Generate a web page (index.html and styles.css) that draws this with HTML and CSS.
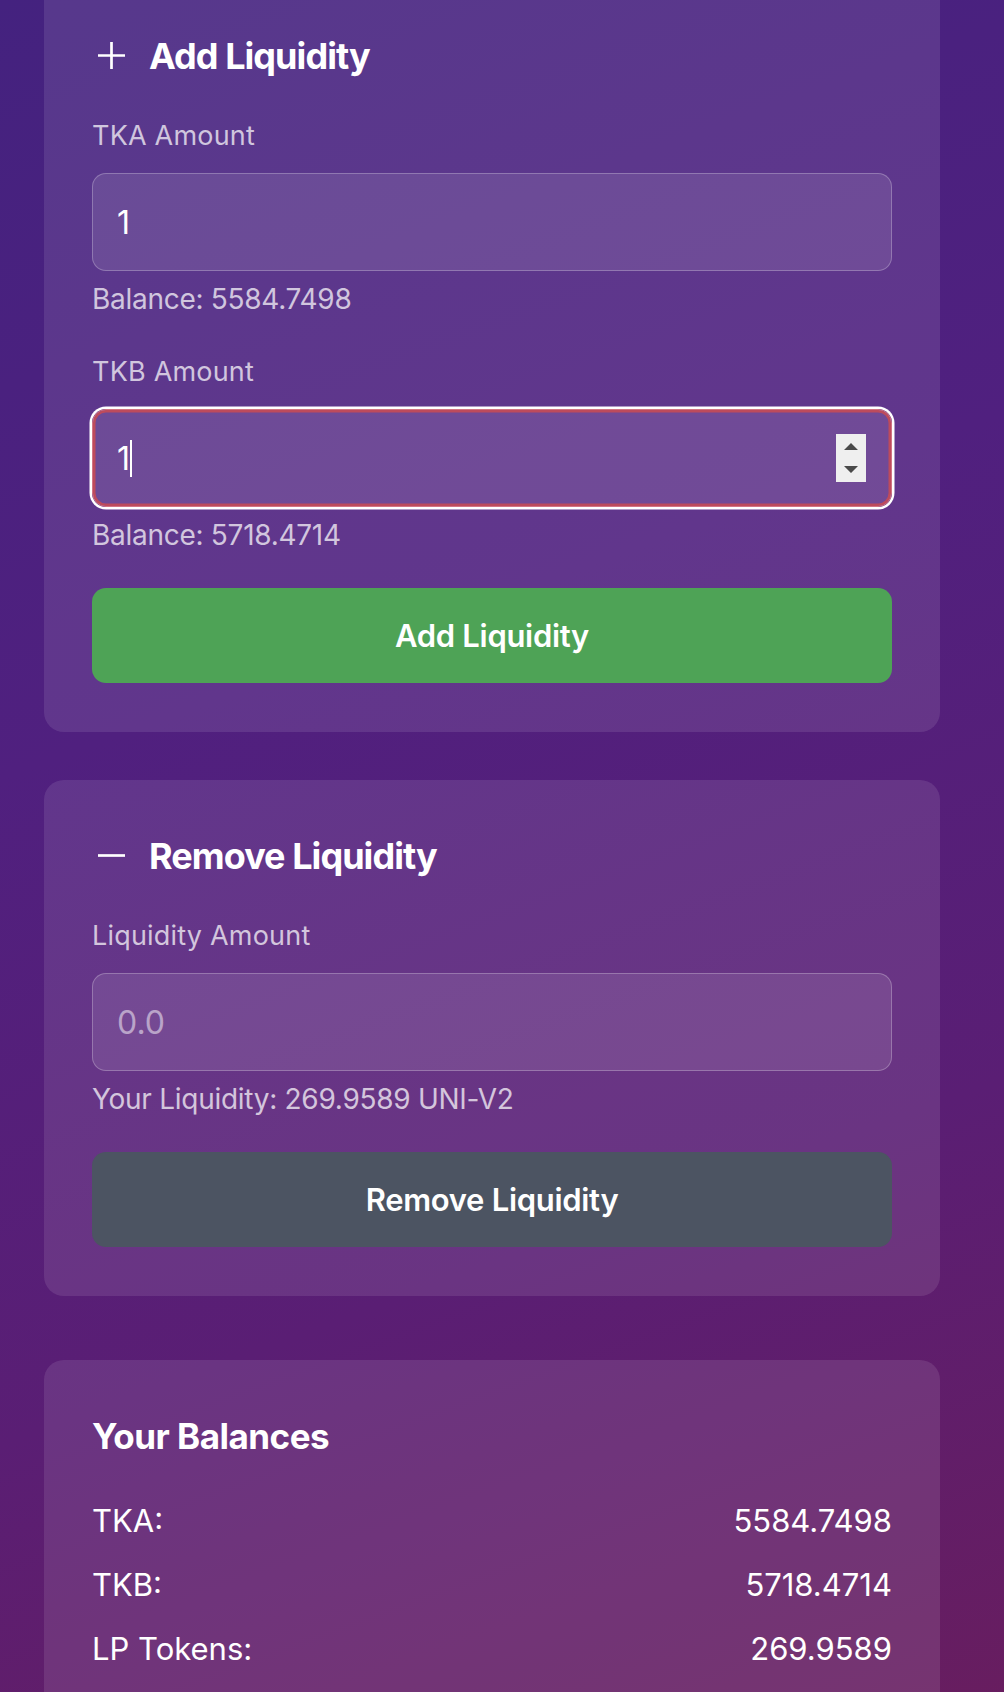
FILE: index.html
```html
<!DOCTYPE html>
<html lang="en">
<head>
<meta charset="utf-8">
<title>Liquidity</title>
<link rel="stylesheet" href="styles.css">
</head>
<body>
<main class="page">
  <section class="card">
    <h2 class="card-title">
      <svg class="title-icon" viewBox="0 0 40 40" aria-hidden="true"><path d="M6 19.5H33M19.5 6V33" /></svg>
      Add Liquidity
    </h2>
    <div class="field">
      <label class="field-label" for="tka">TKA Amount</label>
      <input id="tka" class="field-input" type="text" inputmode="decimal" value="1">
      <p class="field-hint">Balance: 5584.7498</p>
    </div>
    <div class="field field--last">
      <label class="field-label" for="tkb">TKB Amount</label>
      <div class="input-wrap">
        <input id="tkb" class="field-input is-focused" type="text" inputmode="decimal" value="1">
        <span class="caret"></span>
        <span class="spinner" aria-hidden="true">
          <svg viewBox="0 0 30 48"><path d="M8 16L15 9L22 16Z M8 32L22 32L15 39Z"/></svg>
        </span>
      </div>
      <p class="field-hint">Balance: 5718.4714</p>
    </div>
    <button class="btn btn--green" type="button">Add Liquidity</button>
  </section>

  <section class="card">
    <h2 class="card-title">
      <svg class="title-icon" viewBox="0 0 40 40" aria-hidden="true"><path d="M6 19.5H33" /></svg>
      Remove Liquidity
    </h2>
    <div class="field field--last">
      <label class="field-label" for="lp">Liquidity Amount</label>
      <input id="lp" class="field-input" type="text" inputmode="decimal" placeholder="0.0">
      <p class="field-hint">Your Liquidity: 269.9589 UNI-V2</p>
    </div>
    <button class="btn btn--gray" type="button">Remove Liquidity</button>
  </section>

  <section class="card card--balances">
    <h3 class="balances-title">Your Balances</h3>
    <div class="balance-list">
      <div class="balance-row"><span>TKA:</span><span>5584.7498</span></div>
      <div class="balance-row"><span>TKB:</span><span>5718.4714</span></div>
      <div class="balance-row"><span>LP Tokens:</span><span>269.9589</span></div>
    </div>
  </section>
</main>
</body>
</html>
```

FILE: styles.css
```css
* { box-sizing: border-box; }

html, body {
  margin: 0;
  padding: 0;
}

body {
  min-height: 1692px;
  font-family: Inter, "Noto Sans", "DejaVu Sans", sans-serif;
  color: #fff;
  background: linear-gradient(160deg, #44227f 0%, #50207f 35%, #5a1e74 65%, #6b1d5a 100%);
  overflow: hidden;
}

.page {
  width: 1004px;
  padding: 0 64px 80px 44px;
  margin-top: -20px;
  display: flex;
  flex-direction: column;
}

.card {
  width: 896px;
  padding: 54px 48px 49px;
  border-radius: 20px;
  background: rgba(255, 255, 255, 0.1);
  margin-bottom: 48px;
}

.card--balances {
  margin-top: 16px;
  padding-top: 55px;
}

.card-title {
  display: flex;
  align-items: center;
  gap: 17px;
  margin: 0 0 42px;
  font-size: 36px;
  line-height: 44px;
  font-weight: 700;
  letter-spacing: -0.95px;
}

.title-icon {
  width: 40px;
  height: 40px;
  flex: none;
  fill: none;
  stroke: #fff;
  stroke-width: 2.7;
}

.field {
  margin-bottom: 40px;
}

.field--last {
  margin-bottom: 36px;
}

.field-label {
  display: block;
  margin-bottom: 21px;
  font-size: 27px;
  line-height: 32px;
  letter-spacing: 0.2px;
  color: rgba(255, 255, 255, 0.72);
}

.input-wrap {
  position: relative;
}

.field-input {
  display: block;
  width: 100%;
  height: 98px;
  padding: 0 24px;
  border: 1px solid rgba(255, 255, 255, 0.25);
  border-radius: 14px;
  background: rgba(255, 255, 255, 0.1);
  color: #fff;
  font-family: Inter, "Noto Sans", "DejaVu Sans", sans-serif;
  font-size: 32px;
  outline: none;
}

.field-input::placeholder {
  color: rgba(255, 255, 255, 0.5);
}

.field-input.is-focused {
  border-color: #d27484;
  box-shadow: inset 0 0 0 2.5px #bd4b5c, 0 0 0 2.5px #ffffff;
}

.caret {
  position: absolute;
  left: 38px;
  top: 31px;
  width: 1.5px;
  height: 37px;
  background: #fff;
}

.spinner {
  position: absolute;
  right: 26px;
  top: 25px;
  width: 30px;
  height: 48px;
  background: #efefef;
}

.spinner svg {
  display: block;
  width: 30px;
  height: 48px;
  fill: #4a4a4a;
}

.field-hint {
  margin: 11px 0 0;
  font-size: 28px;
  line-height: 34px;
  letter-spacing: -0.28px;
  color: rgba(255, 255, 255, 0.72);
}

.btn {
  display: block;
  width: 100%;
  height: 95px;
  border: 0;
  border-radius: 14px;
  color: #fff;
  font-family: Inter, "Noto Sans", "DejaVu Sans", sans-serif;
  font-size: 31px;
  font-weight: 600;
  letter-spacing: -0.3px;
  cursor: pointer;
}

.btn--green {
  background: #4ea356;
}

.btn--gray {
  background: #4c5462;
}

.balances-title {
  margin: 0 0 32px;
  font-size: 35px;
  line-height: 42px;
  font-weight: 700;
  letter-spacing: -0.5px;
}

.balance-row {
  display: flex;
  justify-content: space-between;
  padding: 14px 0;
  font-size: 31px;
  line-height: 36px;
}
```
